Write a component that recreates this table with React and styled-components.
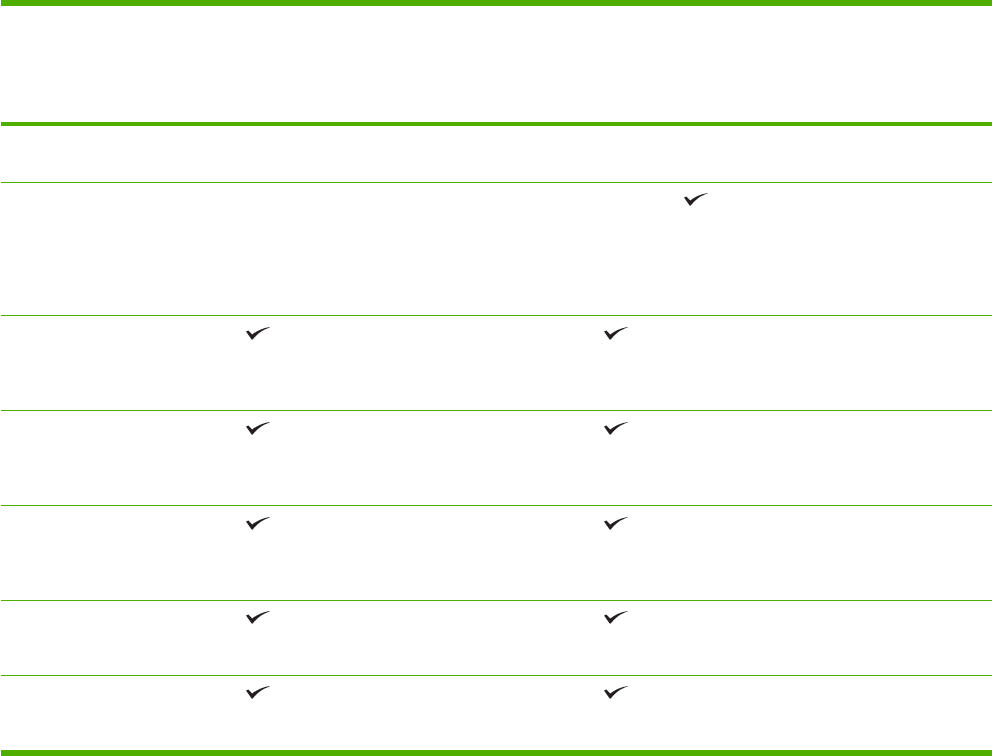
import React from "react";
import styled, { createGlobalStyle } from "styled-components";

const GREEN = "#4fae00";

const Global = createGlobalStyle`
  html, body {
    margin: 0;
    padding: 0;
    background: #ffffff;
    font-family: "Liberation Sans", Arial, sans-serif;
  }
`;

const Table = styled.div`
  width: 991px;
  margin: 0 1px;
  border-top: 6px solid ${GREEN};
  border-bottom: 6px solid ${GREEN};
`;

const Row = styled.div`
  display: grid;
  grid-template-columns: 437px 356px 198px;
  height: ${(p) => p.$h}px;
  border-bottom: ${(p) => p.$rule}px solid ${GREEN};
`;

const Cell = styled.div`
  display: flex;
  align-items: flex-start;
  padding-top: ${(p) => p.$top ?? 10}px;
  padding-left: ${(p) => p.$indent ?? 0}px;
`;

const CheckSvg = styled.svg`
  display: block;
  width: 24px;
  height: 13px;
`;

// tapered tick used in the feature table
function Check() {
  return (
    <CheckSvg viewBox="0 0 24 13">
      <path
        d="M0 4.6 L2.4 3.6 L6.2 7.6 C10.2 4.2 16 1.2 23.5 0 L23.8 0.4 C17 2.4 11.2 6.4 6.8 12.6 L5.6 12.6 Z"
        fill="#231f20"
      />
    </CheckSvg>
  );
}

const rows = [
  { h: 56, cols: [false, false, false] },
  { h: 132, cols: [false, "late", false] },
  { h: 94, cols: [true, true, false] },
  { h: 94, cols: [true, true, false] },
  { h: 94, cols: [true, true, false] },
  { h: 74, cols: [true, true, false] },
  { h: 74, cols: [true, true, false], last: true },
];

const indents = [245, 166, 0];

export default function App() {
  return (
    <>
      <Global />
      <Table>
        <Row $h={116} $rule={4}>
          <Cell />
          <Cell />
          <Cell />
        </Row>
        {rows.map((r, i) => (
          <Row key={i} $h={r.h} $rule={r.last ? 0 : 1}>
            {r.cols.map((c, j) => (
              <Cell
                key={j}
                $indent={c === "late" ? 246 : indents[j]}
                $top={i >= 2 && i <= 4 ? 11 : 10}
              >
                {c && <Check />}
              </Cell>
            ))}
          </Row>
        ))}
      </Table>
    </>
  );
}
